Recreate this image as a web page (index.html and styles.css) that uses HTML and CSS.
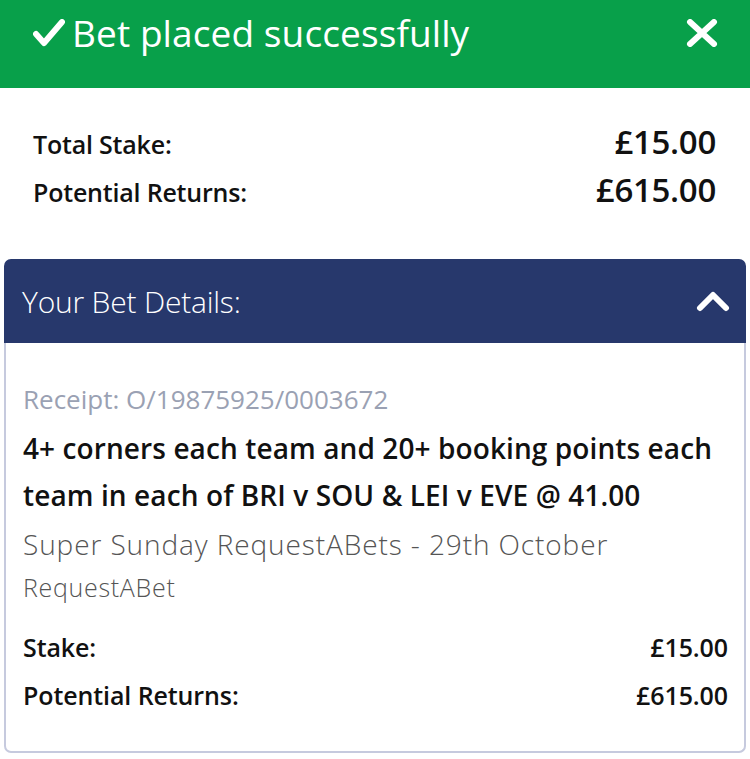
FILE: index.html
```html
<!DOCTYPE html>
<html lang="en">
<head>
<meta charset="utf-8">
<title>Bet placed</title>
<link rel="stylesheet" href="styles.css">
</head>
<body>
<header class="banner">
  <div class="banner-title">
    <svg class="tick" viewBox="0 0 32 28" width="32" height="28"><path d="M3 15 L11 24 L29 3" fill="none" stroke="#fff" stroke-width="6" stroke-linecap="round" stroke-linejoin="round"/></svg>
    <span>Bet placed successfully</span>
  </div>
  <svg class="close" viewBox="0 0 32 28" width="32" height="28"><path d="M4 3 L28 25 M28 3 L4 25" fill="none" stroke="#fff" stroke-width="6" stroke-linecap="round"/></svg>
</header>
<section class="totals">
  <div class="total-row"><span class="label">Total Stake:</span><span class="amount">£15.00</span></div>
  <div class="total-row"><span class="label">Potential Returns:</span><span class="amount">£615.00</span></div>
</section>
<section class="card">
  <div class="card-head">
    <span>Your Bet Details:</span>
    <svg class="chev" viewBox="0 0 34 22" width="34" height="22"><path d="M4 18 L17 5 L30 18" fill="none" stroke="#fff" stroke-width="6" stroke-linecap="round" stroke-linejoin="round"/></svg>
  </div>
  <div class="card-body">
    <div class="receipt">Receipt: O/19875925/0003672</div>
    <div class="selection">4+ corners each team and 20+ booking points each team in each of BRI v SOU &amp; LEI v EVE @ 41.00</div>
    <div class="event">Super Sunday RequestABets - 29th October</div>
    <div class="market">RequestABet</div>
    <div class="detail-row"><span>Stake:</span><span>£15.00</span></div>
    <div class="detail-row"><span>Potential Returns:</span><span>£615.00</span></div>
  </div>
</section>
</body>
</html>
```
FILE: styles.css
```css
html, body {
  margin: 0;
  padding: 0;
  background: #fff;
}
body {
  font-family: "Open Sans", "Noto Sans", sans-serif;
  color: #111;
  width: 750px;
}
.banner {
  background: #08a04a;
  height: 88px;
  box-sizing: border-box;
  padding: 8px 32px 0 33px;
  display: flex;
  justify-content: space-between;
  align-items: flex-start;
  color: #fff;
}
.banner-title {
  display: flex;
  align-items: center;
  gap: 7px;
  font-size: 37px;
  letter-spacing: 0.1px;
  line-height: 50px;
}
.tick { display: block; }
.close { display: block; margin-top: 11px; }
.totals {
  padding: 31px 34px 44px 33px;
}
.total-row {
  display: flex;
  justify-content: space-between;
  align-items: baseline;
  height: 48px;
}
.total-row .label {
  font-size: 25px;
  font-weight: 600;
  letter-spacing: -0.2px;
}
.total-row .amount {
  font-size: 33px;
  font-weight: 600;
  letter-spacing: -0.3px;
}
.card {
  margin: 0 4px;
}
.card-head {
  background: #27386c;
  color: #fff;
  height: 84px;
  border-radius: 7px 7px 0 0;
  display: flex;
  justify-content: space-between;
  align-items: center;
  padding: 0 16px 0 18px;
  font-size: 30px;
  font-weight: 300;
  letter-spacing: -0.2px;
}
.chev { display: block; }
.card-body {
  border: 2px solid #c6cade;
  border-top: none;
  border-radius: 0 0 7px 7px;
  padding: 38px 16px 30px 17px;
  height: 410px;
  box-sizing: border-box;
}
.receipt {
  color: #9aa1b3;
  font-size: 26px;
  letter-spacing: 0;
  line-height: 36px;
}
.selection {
  font-size: 28px;
  font-weight: 600;
  letter-spacing: 0.1px;
  line-height: 47px;
  margin-top: 8px;
}
.event {
  color: #555;
  font-size: 28px;
  font-weight: 300;
  letter-spacing: 0.9px;
  line-height: 46px;
  margin-top: 2px;
}
.market {
  color: #555;
  font-size: 25px;
  font-weight: 300;
  letter-spacing: 0.7px;
  line-height: 40px;
  margin-bottom: 16px;
}
.detail-row {
  display: flex;
  justify-content: space-between;
  font-size: 25px;
  font-weight: 600;
  letter-spacing: -0.1px;
  line-height: 48px;
}
```
